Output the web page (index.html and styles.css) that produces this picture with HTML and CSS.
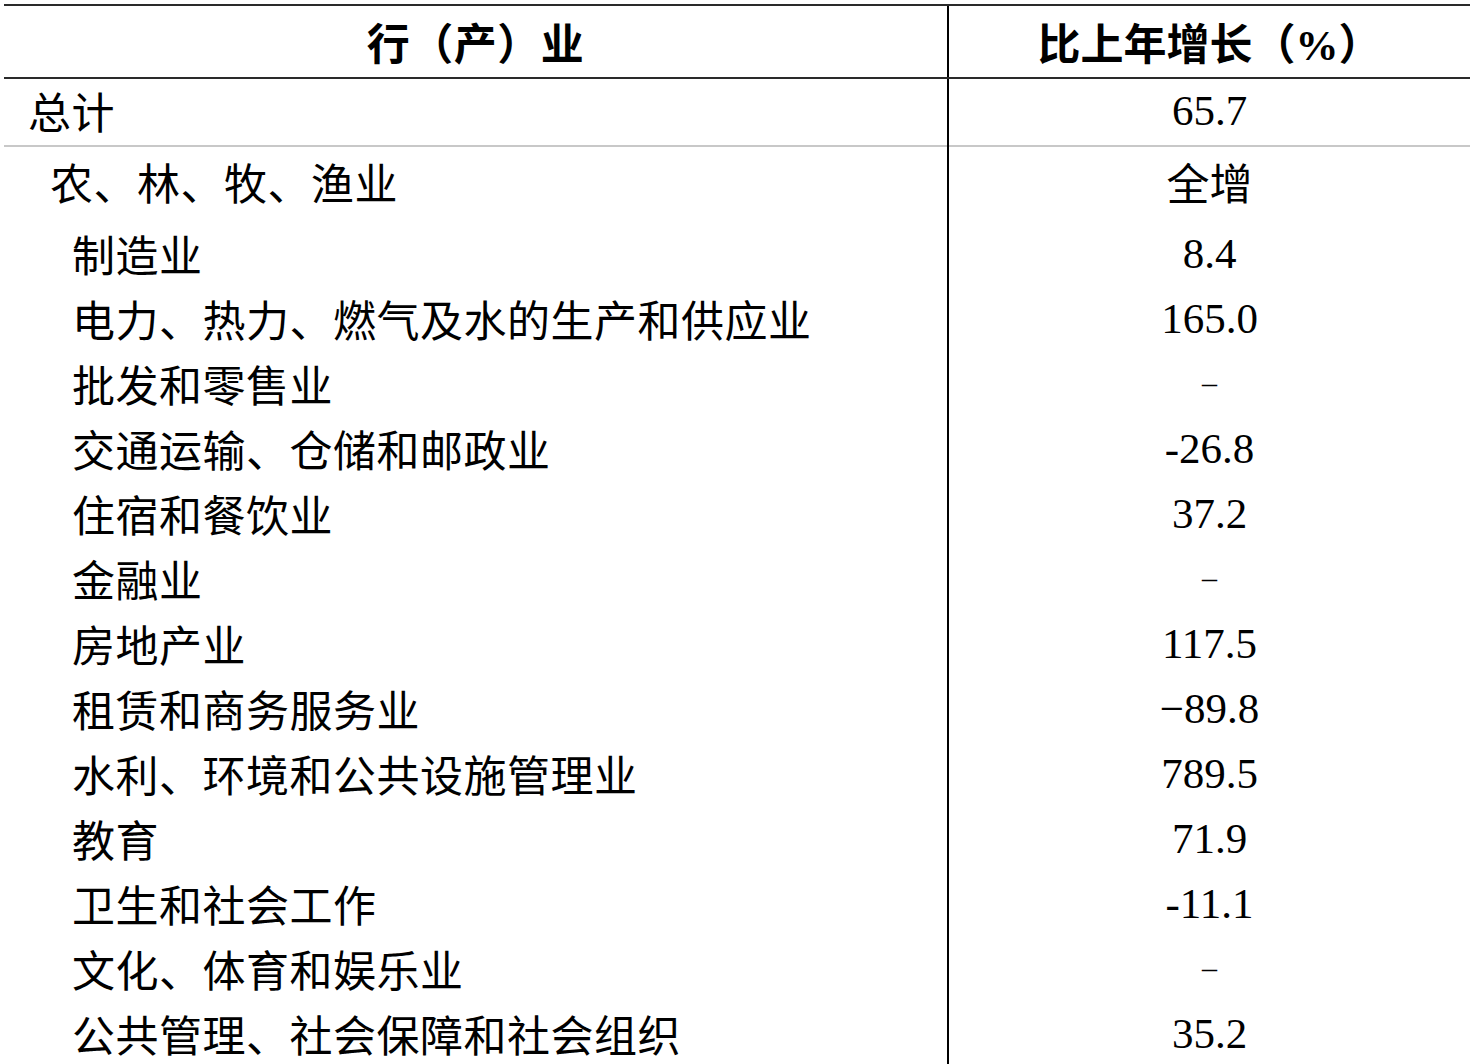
FILE: index.html
```html
<!DOCTYPE html>
<html lang="zh-CN">
<head>
<meta charset="utf-8">
<title>行（产）业 比上年增长</title>
<link rel="stylesheet" href="styles.css">
</head>
<body>
<div class="table">
  <div class="row head">
    <div class="cell name c">行（产）业</div>
    <div class="cell val">比上年增长（%）</div>
  </div>
  <div class="row total">
    <div class="cell name">总计</div>
    <div class="cell val">65.7</div>
  </div>
  <div class="row first l1">
    <div class="cell name">农、林、牧、渔业</div>
    <div class="cell val">全增</div>
  </div>
  <div class="row l2"><div class="cell name">制造业</div><div class="cell val">8.4</div></div>
  <div class="row l2"><div class="cell name">电力、热力、燃气及水的生产和供应业</div><div class="cell val">165.0</div></div>
  <div class="row l2"><div class="cell name">批发和零售业</div><div class="cell val dash">–</div></div>
  <div class="row l2"><div class="cell name">交通运输、仓储和邮政业</div><div class="cell val">-26.8</div></div>
  <div class="row l2"><div class="cell name">住宿和餐饮业</div><div class="cell val">37.2</div></div>
  <div class="row l2"><div class="cell name">金融业</div><div class="cell val dash">–</div></div>
  <div class="row l2"><div class="cell name">房地产业</div><div class="cell val">117.5</div></div>
  <div class="row l2"><div class="cell name">租赁和商务服务业</div><div class="cell val">−89.8</div></div>
  <div class="row l2"><div class="cell name">水利、环境和公共设施管理业</div><div class="cell val">789.5</div></div>
  <div class="row l2"><div class="cell name">教育</div><div class="cell val">71.9</div></div>
  <div class="row l2"><div class="cell name">卫生和社会工作</div><div class="cell val">-11.1</div></div>
  <div class="row l2"><div class="cell name">文化、体育和娱乐业</div><div class="cell val dash">–</div></div>
  <div class="row l2"><div class="cell name">公共管理、社会保障和社会组织</div><div class="cell val">35.2</div></div>
</div>
</body>
</html>
```
FILE: styles.css
```css
html, body {
  margin: 0;
  padding: 0;
  background: #ffffff;
}
body {
  font-family: "Liberation Serif", "Noto Sans CJK SC", serif;
  font-size: 43px;
  color: #000;
  overflow: hidden;
  height: 1064px;
}
.table {
  margin: 4px 0 0 4px;
  width: 1466px;
  border-top: 2px solid #2a2a2a;
}
.row {
  display: grid;
  grid-template-columns: 945px 1fr;
  height: 65px;
}
.cell {
  display: flex;
  align-items: center;
  white-space: nowrap;
  padding-bottom: 8px;
}
.cell.name {
  border-right: 2px solid #000;
  letter-spacing: 0.5px;
}
.cell.val {
  justify-content: center;
}
.cell.c {
  justify-content: center;
}
.head {
  height: 71px;
  border-bottom: 2px solid #2a2a2a;
  font-weight: bold;
}
.head .cell {
  padding-bottom: 2px;
}
.total {
  height: 66px;
  border-bottom: 2px solid #c8c8c8;
}
.total .name {
  padding-left: 24px;
}
.first {
  height: 75px;
}
.l1 .name {
  padding-left: 46px;
}
.l2 .name {
  padding-left: 68px;
}
.dash {
  font-size: 30px;
}
```
